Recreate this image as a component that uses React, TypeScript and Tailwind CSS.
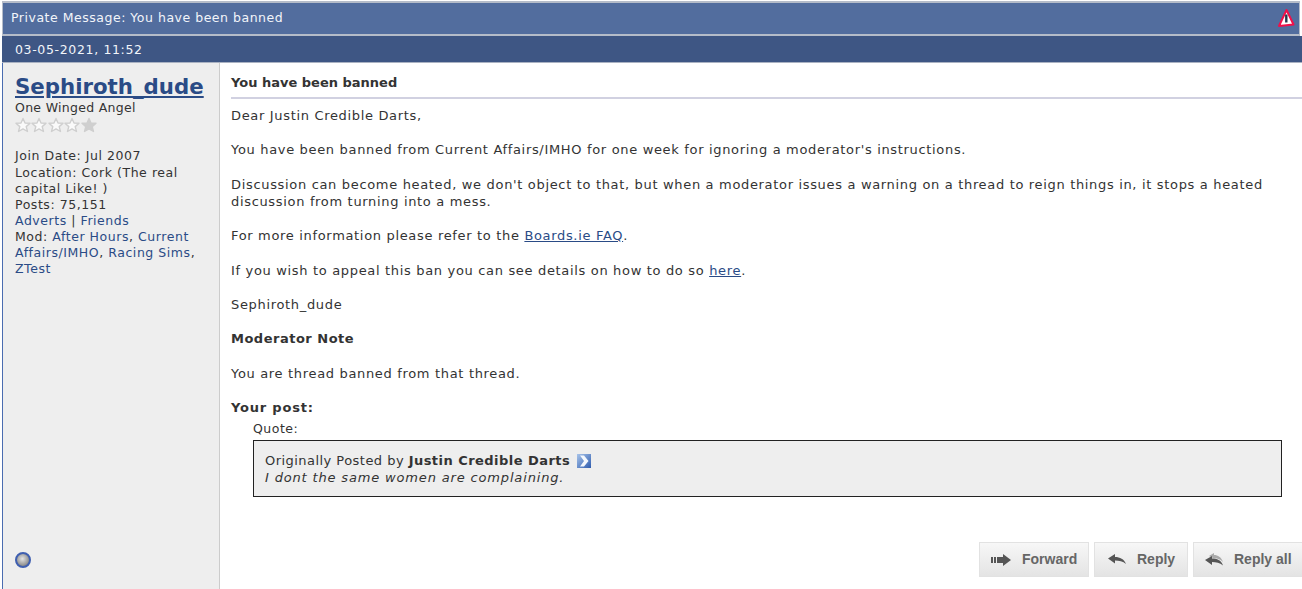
const font = "font-['DejaVu_Sans',Verdana,sans-serif]";

const Star = ({ filled }: { filled?: boolean }) => (
    <svg width="16" height="16" viewBox="0 0 16 16">
        <path
            d="M8 1.500 L10 6 L15 6.300 L11.200 9.600 L12.500 14.500 L8 11.900 L3.500 14.500 L4.800 9.600 L1 6.300 L6 6 Z"
            fill={filled ? '#cfcfcf' : '#fafafa'}
            stroke="#cfcfcf"
            strokeWidth="1.400"
            strokeLinejoin="round"
        />
    </svg>
);

const ActionButton = ({ label, icon, className }: { label: string; icon: React.ReactNode; className: string }) => (
    <div className={`h-[35px] flex items-center border border-[#e2e2e2] bg-gradient-to-b from-[#f7f7f7] to-[#e4e4e4] text-[14px] tracking-normal font-bold text-[#666] font-['Liberation_Sans',Arial,sans-serif] ${className}`}>
        {icon}
        <span>{label}</span>
    </div>
);

const App = () => {
    return (
        <div className={`w-[1302px] h-[589px] overflow-hidden bg-white text-[13px] leading-[17px] tracking-[0.67px] text-[#333] ${font}`}>
            <div className="h-[35px] mx-[2px] mt-px pl-[8px] pr-[5px] flex items-center justify-between bg-[#526d9e] border-y-2 border-x border-[#b5bcc9] text-[#f2f5fa] text-[12.5px] tracking-[0.52px]">
                <span className="-mt-[2px]">Private Message: You have been banned</span>
                <svg width="18" height="20" viewBox="0 0 18 20" className="-mr-px -mt-[1px]">
                    <path d="M9.500 2 L16.500 16.500 L2 18 Z" fill="#fff" stroke="#f0104a" strokeWidth="2" strokeLinejoin="round" />
                    <path d="M9.300 6.500 V14.500" stroke="#24344c" strokeWidth="2.400" />
                </svg>
            </div>
            <div className="h-[27px] ml-[2px] pl-[13px] flex items-center bg-[#3e5684] border-b border-[#aab2c2] text-[#f2f5fa] text-[12.5px] tracking-[0.65px]">
                03-05-2021, 11:52
            </div>
            <div className="flex h-[526px] ml-[2px]">
                <div className="w-[218px] shrink-0 pl-[12px] pr-2 pt-[11px] bg-[#eeeeee] border-l border-r border-l-[#4a6cb0] border-r-[#cccccc] flex flex-col text-[12.5px] leading-[16px] tracking-[0.55px]">
                    <a className="text-[21.3px] leading-[26px] tracking-normal font-bold text-[#2a4b86] underline">Sephiroth_dude</a>
                    <div className="tracking-[0.3px]">One Winged Angel</div>
                    <div className="flex gap-[0.4px] h-[16px] mt-[1px]">
                        <Star /><Star /><Star /><Star /><Star filled />
                    </div>
                    <div className="mt-[15px]">
                        <div>Join Date: Jul 2007</div>
                        <div className="pr-[10px] mt-px">Location: Cork (The real capital Like! )</div>
                        <div>Posts: 75,151</div>
                        <div><a className="text-[#2a4b86]">Adverts</a> | <a className="text-[#2a4b86]">Friends</a></div>
                        <div>Mod: <a className="text-[#2a4b86]">After Hours</a>, <a className="text-[#2a4b86]">Current Affairs/IMHO</a>, <a className="text-[#2a4b86]">Racing Sims</a>, <a className="text-[#2a4b86]">ZTest</a></div>
                    </div>
                    <div className="mt-[275px]">
                        <div className="w-[16px] h-[16px] rounded-full border-2 border-[#3f5fb0] bg-[radial-gradient(circle_at_45%_40%,#e4e4e4,#6a6a6a)]" />
                    </div>
                </div>
                <div className="flex-1 flex flex-col pl-[11px] pt-[11px] min-w-0">
                    <div className="pb-[6px] border-b-2 border-[#d1d1e1] font-bold text-[13px] tracking-normal">You have been banned</div>
                    <div className="mt-[8px] flex flex-col gap-[17.4px]">
                        <p>Dear Justin Credible Darts,</p>
                        <p>You have been banned from Current Affairs/IMHO for one week for ignoring a moderator's instructions.</p>
                        <p>Discussion can become heated, we don't object to that, but when a moderator issues a warning on a thread to reign things in, it stops a heated discussion from turning into a mess.</p>
                        <p>For more information please refer to the <a className="text-[#2a4b86] underline">Boards.ie FAQ</a>.</p>
                        <p>If you wish to appeal this ban you can see details on how to do so <a className="text-[#2a4b86] underline">here</a>.</p>
                        <p>Sephiroth_dude</p>
                        <p className="font-bold tracking-[0.5px]">Moderator Note</p>
                        <p>You are thread banned from that thread.</p>
                        <p className="font-bold tracking-[0.8px]">Your post:</p>
                    </div>
                    <div className="ml-[22px] mr-[20px] mt-[4px]">
                        <div className="text-[12.5px] tracking-[0.5px] h-[16px]">Quote:</div>
                        <div className="mt-[4px] h-[57px] px-[11px] pt-[11px] bg-[#eeeeee] border border-[#222] tracking-[0.46px]">
                            <div className="flex items-center gap-[7px]">
                                <span>Originally Posted by <b>Justin Credible Darts</b></span>
                                <svg width="14" height="14" viewBox="0 0 14 14">
                                    <defs>
                                        <linearGradient id="goPost" x1="0" y1="0" x2="1" y2="1">
                                            <stop offset="0" stopColor="#a8c4ea" />
                                            <stop offset="1" stopColor="#2f5cae" />
                                        </linearGradient>
                                    </defs>
                                    <rect width="14" height="14" fill="url(#goPost)" />
                                    <path d="M3 1.500 H7 L11.500 7 L7 12.500 H3 L7 7 Z" fill="#f4f8fd" />
                                </svg>
                            </div>
                            <div className="italic tracking-[0.84px]">I dont the same women are complaining.</div>
                        </div>
                    </div>
                    <div className="mt-auto mb-[12px] flex justify-end gap-[5px] -mr-[6px]">
                        <ActionButton
                            label="Forward"
                            className="w-[110px] pl-[11px] gap-[11px]"
                            icon={<svg width="20" height="12" viewBox="0 0 20 12"><path d="M0 3h2v6H0zM3 3h2v6H3zM6 3h6V0l8 6-8 6V9H6z" fill="#555" /></svg>}
                        />
                        <ActionButton
                            label="Reply"
                            className="w-[94px] pl-[13px] gap-[11px]"
                            icon={<svg width="18" height="12" viewBox="0 0 18 12"><path d="M0 4.500 L7 0 V3 C12 3 16 5 18 10 C15 7 11 6.500 7 6.500 V9.500 Z" fill="#555" /></svg>}
                        />
                        <ActionButton
                            label="Reply all"
                            className="w-[115px] pl-[11px] gap-[11px]"
                            icon={<svg width="18" height="14" viewBox="0 0 18 14"><path d="M4 3 L9 0 V2 C13 2 16 4 18 9 C15 6 12 5 8 5 Z" fill="#aaa" /><path d="M0 7 L7 3 V5.500 C12 5.500 16 7 18 12.500 C15 9.500 11 9 7 9 V12 Z" fill="#555" /></svg>}
                        />
                    </div>
                </div>
            </div>
        </div>
    );
};

export default App;
